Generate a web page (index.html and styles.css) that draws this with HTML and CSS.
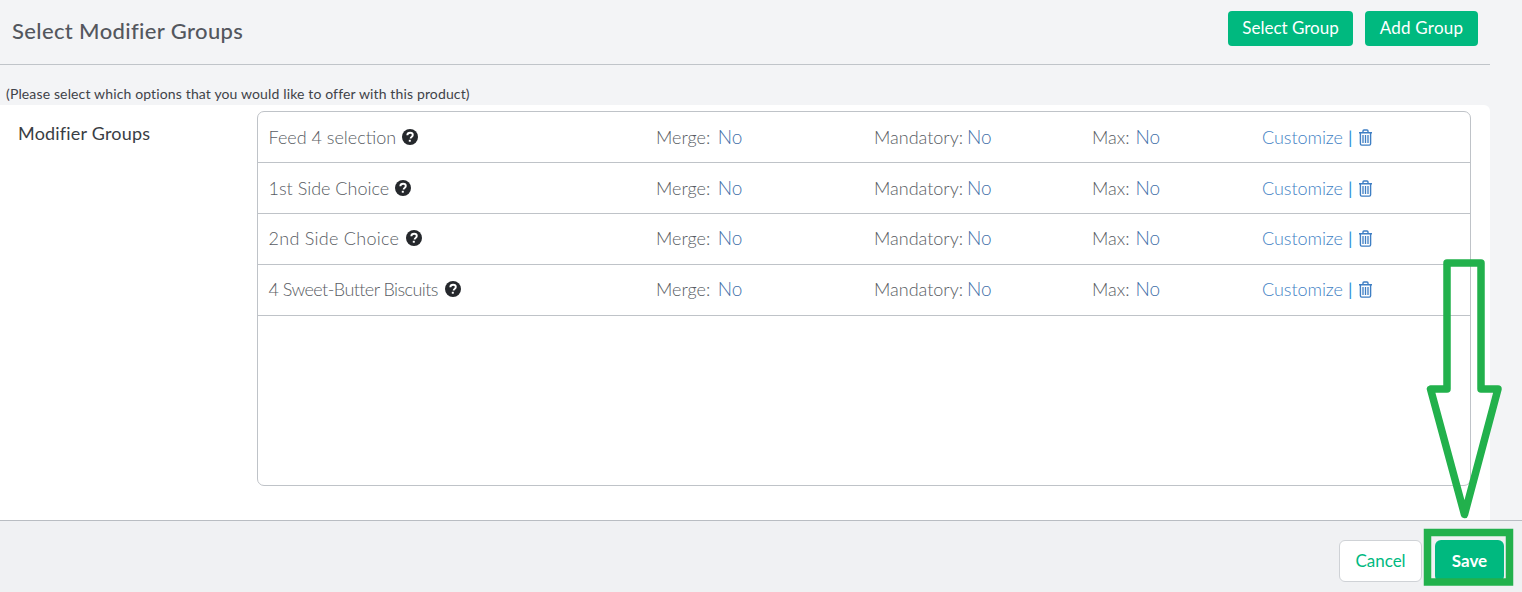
FILE: index.html
```html
<!DOCTYPE html>
<html lang="en">
<head>
<meta charset="utf-8">
<title>Select Modifier Groups</title>
<link rel="stylesheet" href="styles.css">
</head>
<body>
<svg width="0" height="0" class="defs">
  <symbol id="q" viewBox="0 0 16 16">
    <circle cx="8" cy="8" r="8" fill="#25282c"/>
    <path d="M5.3 6.2C5.4 4.7 6.5 3.8 8.1 3.8c1.6 0 2.7 1 2.7 2.2 0 1-.6 1.5-1.3 2-.6.4-.8.7-.8 1.3v.3" fill="none" stroke="#fff" stroke-width="1.9"/>
    <rect x="6.8" y="10.8" width="2" height="1.9" fill="#fff"/>
  </symbol>
  <symbol id="trash" viewBox="0 0 15 17">
    <path d="M1 3.7h13M2.4 3.7v11c0 .9.5 1.4 1.3 1.4h7.6c.8 0 1.3-.5 1.3-1.4v-11M5 3.5V2c0-.6.4-1 1-1h3c.6 0 1 .4 1 1v1.5" fill="none" stroke="#3f7fc4" stroke-width="1.4"/>
    <path d="M5 6v8M7.5 6v8M10 6v8" fill="none" stroke="#3f7fc4" stroke-width="1.3"/>
  </symbol>
</svg>

<div class="page">
  <header class="top">
    <h1 class="title">Select Modifier Groups</h1>
    <div class="actions">
      <button class="btn btn-select">Select Group</button>
      <button class="btn btn-add">Add Group</button>
    </div>
  </header>

  <p class="hint">(Please select which options that you would like to offer with this product)</p>

  <section class="panel">
    <div class="label">Modifier Groups</div>
    <div class="box">
      <div class="row">
        <div class="name">Feed 4 selection <svg class="q"><use href="#q"/></svg></div>
        <div class="merge">Merge: <span class="val">No</span></div>
        <div class="mand">Mandatory: <span class="val">No</span></div>
        <div class="max">Max: <span class="val">No</span></div>
        <div class="cust">Customize <span class="bar">|</span> <svg class="tr"><use href="#trash"/></svg></div>
      </div>
      <div class="row">
        <div class="name">1st Side Choice <svg class="q"><use href="#q"/></svg></div>
        <div class="merge">Merge: <span class="val">No</span></div>
        <div class="mand">Mandatory: <span class="val">No</span></div>
        <div class="max">Max: <span class="val">No</span></div>
        <div class="cust">Customize <span class="bar">|</span> <svg class="tr"><use href="#trash"/></svg></div>
      </div>
      <div class="row row-up">
        <div class="name name-wide">2nd Side Choice <svg class="q"><use href="#q"/></svg></div>
        <div class="merge">Merge: <span class="val">No</span></div>
        <div class="mand">Mandatory: <span class="val">No</span></div>
        <div class="max">Max: <span class="val">No</span></div>
        <div class="cust">Customize <span class="bar">|</span> <svg class="tr"><use href="#trash"/></svg></div>
      </div>
      <div class="row row-up">
        <div class="name name-tight">4 Sweet-Butter Biscuits <svg class="q"><use href="#q"/></svg></div>
        <div class="merge">Merge: <span class="val">No</span></div>
        <div class="mand">Mandatory: <span class="val">No</span></div>
        <div class="max">Max: <span class="val">No</span></div>
        <div class="cust">Customize <span class="bar">|</span> <svg class="tr"><use href="#trash"/></svg></div>
      </div>
    </div>
  </section>

  <footer class="foot">
    <button class="btn btn-cancel">Cancel</button>
    <button class="btn btn-save">Save</button>
  </footer>
</div>

<svg class="annot" width="1522" height="592" viewBox="0 0 1522 592">
  <polygon points="1447,263 1481,263 1481,389 1498,389 1464.5,514.5 1430.5,389 1447,389" fill="none" stroke="#22b14c" stroke-width="7.5" stroke-linejoin="round"/>
  <rect x="1427.5" y="532.5" width="82" height="49.5" fill="none" stroke="#22b14c" stroke-width="7.5"/>
</svg>
</body>
</html>
```
FILE: styles.css
```css
* { box-sizing: border-box; }
html, body { margin: 0; padding: 0; }
body {
  position: relative;
  width: 1522px;
  height: 592px;
  overflow: hidden;
  background: #f3f4f6;
  font-family: "Lato", "Noto Sans", sans-serif;
  color: #4f5359;
}
.defs { position: absolute; }
.page { display: flex; flex-direction: column; height: 592px; }

.top {
  width: 1490px;
  height: 65px;
  border-bottom: 1px solid #c0c4c9;
  display: flex;
  align-items: flex-start;
  justify-content: space-between;
  padding: 11px 12px 0 12px;
}
.title {
  margin: 8px 0 0;
  font-size: 22px;
  line-height: 24px;
  font-weight: 500;
  letter-spacing: .37px;
  color: #53575e;
}
.actions { display: flex; gap: 12px; }
.btn {
  font-family: inherit;
  border: 1px solid transparent;
  border-radius: 4px;
  cursor: pointer;
  padding: 0 0 2px;
}
.btn-select, .btn-add {
  height: 35px;
  background: #00b97f;
  color: #fff;
  font-size: 17px;
}
.btn-select { width: 125px; }
.btn-add { width: 113px; letter-spacing: .2px; }

.hint {
  margin: 20px 0 0 6px;
  height: 20px;
  font-size: 14px;
  line-height: 18px;
  letter-spacing: .14px;
  color: #3f4349;
}

.panel {
  width: 1490px;
  height: 415px;
  background: #fff;
  border-radius: 0 6px 0 0;
  display: flex;
  padding: 6px 0 0 18px;
}
.label {
  width: 239px;
  font-size: 18px;
  line-height: 24px;
  padding-top: 10px;
  letter-spacing: .2px;
  color: #3a3e44;
}
.box {
  width: 1214px;
  height: 375px;
  border: 1px solid #bfc3c8;
  border-radius: 7px;
}
.row {
  display: grid;
  grid-template-columns: 388px 218px 218px 170px 1fr;
  align-items: center;
  height: 51px;
  padding-left: 10px;
  border-bottom: 1px solid #bfc3c8;
  font-size: 18px;
  line-height: 22px;
  font-weight: 300;
  color: #585c63;
}
.row-up { padding-bottom: 2px; }
.name { display: flex; align-items: center; gap: 6px; padding-left: .5px; }
.name-wide { letter-spacing: .27px; gap: 7px; }
.name-tight { letter-spacing: -.57px; gap: 7px; }
.val { color: #3f6fa8; font-size: 19px; line-height: 1; }
.merge .val { margin-left: 2.5px; }
.mand .val { margin-left: -1px; }
.max .val { margin-left: 1px; }
.q { width: 16px; height: 16px; }
.cust { display: flex; align-items: center; gap: 5px; color: #3f7fc4; letter-spacing: -.05px; }
.bar { color: #2f8fd8; font-weight: 400; }
.tr { width: 15px; height: 17px; margin-left: 1px; }

.foot {
  flex: 1;
  border-top: 1px solid #b9bdc2;
  background: #f0f1f3;
  display: flex;
  justify-content: flex-end;
  align-items: flex-start;
  gap: 13px;
  padding: 19px 18px 0 0;
}
.btn-cancel {
  width: 83px;
  height: 42px;
  background: #fff;
  border-color: #cfd2d6;
  color: #00b97f;
  font-size: 17px;
  border-radius: 6px;
}
.btn-save {
  width: 69px;
  height: 42px;
  background: #00b97f;
  color: #fff;
  font-size: 17px;
  font-weight: 700;
  border-radius: 6px;
}
.annot { position: absolute; left: 0; top: 0; pointer-events: none; }
```
